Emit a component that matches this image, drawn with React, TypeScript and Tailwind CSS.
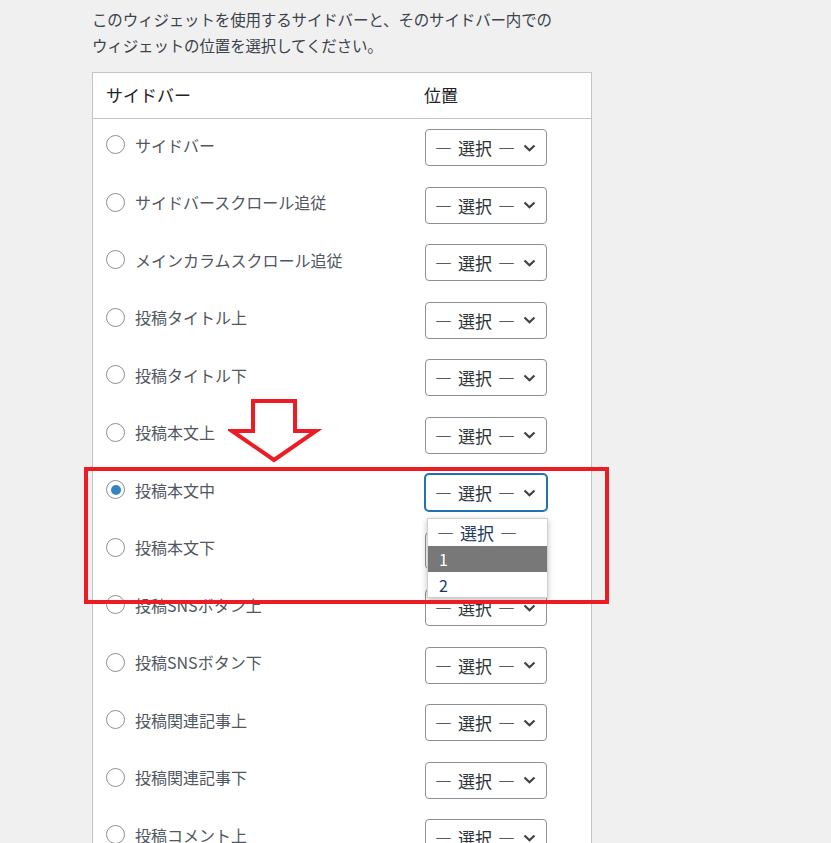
import React from "react";

const rows = [
  "サイドバー",
  "サイドバースクロール追従",
  "メインカラムスクロール追従",
  "投稿タイトル上",
  "投稿タイトル下",
  "投稿本文上",
  "投稿本文中",
  "投稿本文下",
  "投稿SNSボタン上",
  "投稿SNSボタン下",
  "投稿関連記事上",
  "投稿関連記事下",
  "投稿コメント上",
  "投稿コメント下",
];

function Chevron() {
  return (
    <svg width="13" height="8" viewBox="0 0 13 8" className="shrink-0">
      <path d="M1.5 1.5 L6.5 6.2 L11.5 1.5" fill="none" stroke="#3c434a" strokeWidth="2.2" />
    </svg>
  );
}

function Radio({ checked }: { checked?: boolean }) {
  return (
    <span className="w-[19px] h-[19px] rounded-full border border-[#8c8f94] bg-white flex items-center justify-center shrink-0">
      {checked && <span className="w-[10px] h-[10px] rounded-full bg-[#3582c4]" />}
    </span>
  );
}

function Choose({ className }: { className: string }) {
  return (
    <span className={"flex items-center gap-[6px] leading-none " + className}>
      <span>―</span>
      <span>選択</span>
      <span>―</span>
    </span>
  );
}

function Select({ focused, hidden }: { focused?: boolean; hidden?: boolean }) {
  return (
    <div
      className={
        focused
          ? "relative w-[122px] h-[37px] rounded-[4px] border border-[#2271b1] shadow-[0_0_0_1px_#2271b1] bg-white flex items-center justify-between pl-[9px] pr-[10px]"
          : "relative w-[122px] h-[37px] rounded-[4px] border border-[#8c8f94] bg-white flex items-center justify-between pl-[9px] pr-[10px]"
      }
    >
      <div className={hidden ? "invisible flex items-center justify-between w-full" : "flex items-center justify-between w-full"}>
        <Choose className="text-[17px] text-[#2c3338]" />
        <Chevron />
      </div>
      {focused && (
        <div className="absolute left-[1px] top-[43px] w-[121px] bg-white border border-[#d0d0d0] shadow-[0_2px_6px_rgba(0,0,0,0.25)] z-10">
          <div className="h-[27px] flex items-center pl-[9px]">
            <Choose className="text-[17px] text-[#1e3a5f]" />
          </div>
          <div className="h-[26px] flex items-center pl-[11px] text-[16px] leading-none bg-[#787878] text-white">1</div>
          <div className="h-[25px] flex items-center pl-[11px] text-[16px] leading-none text-[#1e3a5f]">2</div>
        </div>
      )}
    </div>
  );
}

export default function App() {
  return (
    <div className="relative w-[831px] h-[843px] overflow-hidden bg-[#f0f0f1] font-['Noto_Sans_CJK_JP',sans-serif]">
      <div className="pl-[92px] pt-[6px]">
        <p className="text-[15.5px] tracking-[-0.15px] leading-[26px] text-[#3c434a] w-[480px]">
          このウィジェットを使用するサイドバーと、そのサイドバー内での
          <br />
          ウィジェットの位置を選択してください。
        </p>
        <div className="mt-[14px] w-[500px] bg-white border border-[#c3c4c7]">
          <div className="h-[46px] flex items-center border-b border-[#c3c4c7] text-[17px] leading-none text-[#1d2327]">
            <div className="w-[331px] pl-[13px] pb-[2px]">サイドバー</div>
            <div className="pb-[2px]">位置</div>
          </div>
          {rows.map((r, i) => (
            <div key={r} className="h-[57.5px] flex items-center">
              <div className="w-[331px] pl-[13px] flex items-center gap-[10px] pb-[6px]">
                <Radio checked={i === 6} />
                <span className="text-[16px] leading-none text-[#50575e]">{r}</span>
              </div>
              <div className="pl-[1px]">
                <Select focused={i === 6} hidden={i === 7} />
              </div>
            </div>
          ))}
        </div>
      </div>

      {/* annotation: red frame and arrow */}
      <div className="absolute left-[84px] top-[467px] w-[525px] h-[137px] border-4 border-[#ed1c24] pointer-events-none z-20" />
      <svg className="absolute left-[228px] top-[397px] z-20" width="94" height="70" viewBox="0 0 94 70">
        <path
          d="M25 4 L67 4 L67 34 L88 34 L46 63 L4 34 L25 34 Z"
          fill="white"
          stroke="#ed1c24"
          strokeWidth="4"
          strokeLinejoin="miter"
        />
      </svg>
    </div>
  );
}
